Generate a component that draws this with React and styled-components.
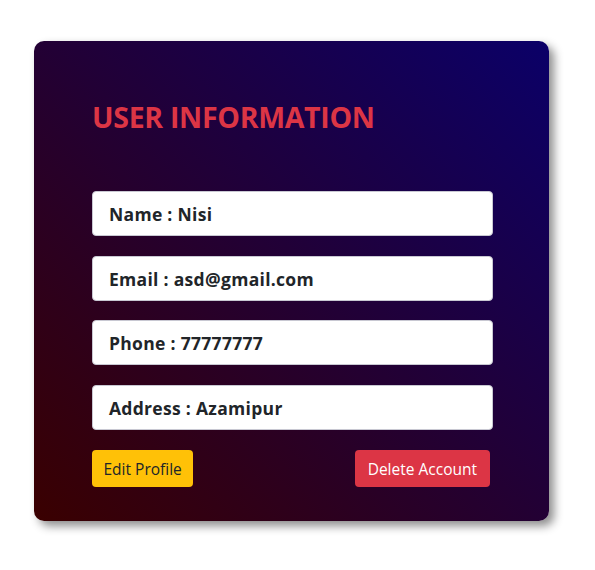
import React from "react";
import styled, { createGlobalStyle } from "styled-components";

const GlobalStyle = createGlobalStyle`
  body {
    margin: 0;
    background: #fff;
    font-family: "Open Sans", "Noto Sans", sans-serif;
  }
`;

const user = {
  name: "Nisi",
  email: "asd@gmail.com",
  phone: "77777777",
  address: "Azamipur",
};

const UserInfo = () => {
  return (
    <Page>
      <GlobalStyle />
      <Card>
        <Title>USER INFORMATION</Title>
        <Fields>
          <Field>Name : {user.name}</Field>
          <Field>Email : {user.email}</Field>
          <Field>Phone : {user.phone}</Field>
          <Field>Address : {user.address}</Field>
        </Fields>
        <Actions>
          <Button variant="warning">Edit Profile</Button>
          <Button variant="danger">Delete Account</Button>
        </Actions>
      </Card>
    </Page>
  );
};

const Page = styled.div`
  padding: 41px 0 40px 34px;
`;

const Card = styled.div`
  box-sizing: border-box;
  width: 515px;
  height: 480px;
  padding: 58px 56px 34px 58px;
  border-radius: 10px;
  background: linear-gradient(to right top, #3a0000, #0b0068);
  box-shadow: 5px 5px 10px rgba(0, 0, 0, 0.45);
`;

const Title = styled.h2`
  margin: 0 0 56px;
  font-size: 28.5px;
  line-height: 36px;
  font-weight: 700;
  color: #dc3545;
  letter-spacing: -0.3px;
`;

const Fields = styled.div`
  display: flex;
  flex-direction: column;
  gap: 19.7px;
`;

const Field = styled.div`
  box-sizing: border-box;
  height: 45px;
  display: flex;
  align-items: center;
  padding: 1px 16px 0;
  background: #fff;
  border: 1px solid #c8c8d2;
  border-radius: 4px;
  font-size: 17.5px;
  font-weight: 700;
  letter-spacing: 0.3px;
  color: #212529;
`;

const Actions = styled.div`
  display: flex;
  justify-content: space-between;
  margin-top: 20px;
  padding-right: 3px;
`;

const Button = styled.button`
  height: 37px;
  padding: 0 ${(p) => (p.variant === "danger" ? "13px" : "11.5px")};
  border: none;
  border-radius: 4px;
  font-family: "Open Sans", "Noto Sans", sans-serif;
  font-size: 15.5px;
  cursor: pointer;
  background: ${(p) => (p.variant === "danger" ? "#dc3545" : "#ffc107")};
  color: ${(p) => (p.variant === "danger" ? "#fff" : "#212529")};
`;

export default UserInfo;
